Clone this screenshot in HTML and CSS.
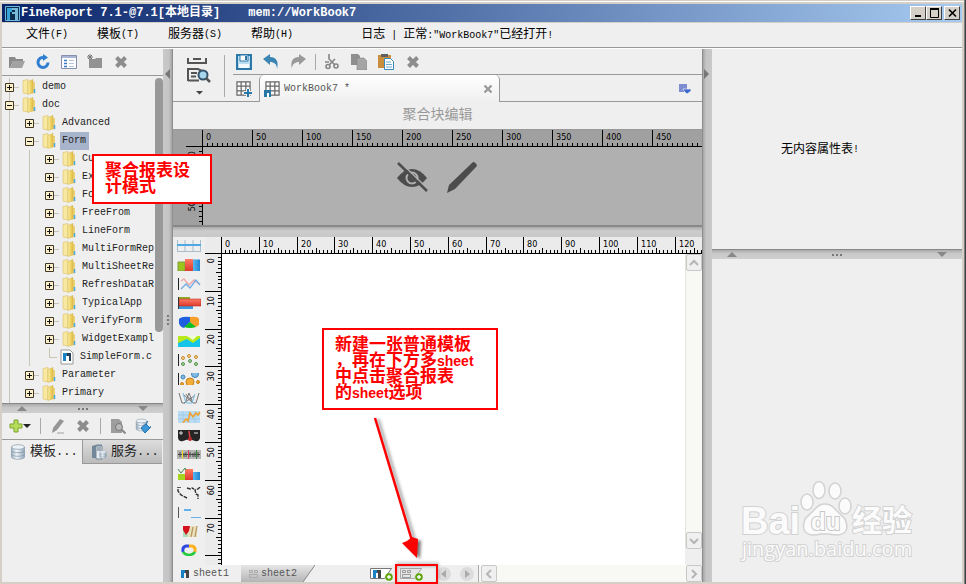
FILE: index.html
```html
<!DOCTYPE html>
<html lang="zh-CN">
<head>
<meta charset="utf-8">
<title>FineReport 7.1</title>
<link rel="stylesheet" href="styles.css">
</head>
<body>
<svg class="defs" aria-hidden="true">
  <defs>
    <linearGradient id="gold" x1="0" x2="1"><stop offset="0" stop-color="#fdf3b0"/><stop offset=".5" stop-color="#efd568"/><stop offset="1" stop-color="#e2bd45"/></linearGradient>
    <linearGradient id="steel" x1="0" x2="1"><stop offset="0" stop-color="#9fb2c4"/><stop offset=".4" stop-color="#f4f8fb"/><stop offset="1" stop-color="#93a7ba"/></linearGradient>
    <linearGradient id="red" x2="0" y2="1"><stop offset="0" stop-color="#ff7a66"/><stop offset="1" stop-color="#dc3a2c"/></linearGradient>
    <linearGradient id="blue" x1="0" x2="1"><stop offset="0" stop-color="#55b8f0"/><stop offset="1" stop-color="#2383cf"/></linearGradient>
  </defs>
  <symbol id="folder" viewBox="0 0 14 16"><path d="M8 3h5v11.500H8z" fill="#ecd27a"/><path d="M1 1.500 6 .5v14.500l-5-1z" fill="#f7e9a2" stroke="#dcc068" stroke-width=".6"/><path d="m6 2.500 5-2v13l-5 2z" fill="url(#gold)" stroke="#d9bb58" stroke-width=".6"/><path d="M12.500 10v4" stroke="#49a7dc" stroke-width="1.500"/></symbol>
  <symbol id="fine" viewBox="0 0 14 16"><path d="M1 1h9l3 3v11H1z" fill="#fff" stroke="#999"/><path d="M3 4h4v3H6v5H3z" fill="#1782c5"/><path d="M7 4h4v8H9V7H7z" fill="#263f55"/></symbol>
  <symbol id="cross" viewBox="0 0 16 16"><path d="m3.500 3.500 9 9m0-9-9 9" stroke="#8d8d8d" stroke-width="4"/></symbol>
  <symbol id="grid" viewBox="0 0 16 16"><path d="M1 1h14v14H1zM1 5.500h14M1 10.500h14M5.500 1v14M10.500 1v14" fill="#fafafa" stroke="#666" stroke-width="1.300"/></symbol>
  <symbol id="plus" viewBox="0 0 9 9"><path d="M.5.500h8v8h-8z" fill="#fbf0c8" stroke="#41382a"/><path d="M2 4.500h5M4.500 2v5" stroke="#111"/></symbol>
  <symbol id="minus" viewBox="0 0 9 9"><path d="M.5.500h8v8h-8z" fill="#fbf0c8" stroke="#41382a"/><path d="M2 4.500h5" stroke="#111"/></symbol>
  <symbol id="add" viewBox="0 0 8 8"><circle cx="4" cy="4" r="3.800" fill="#5fa60b"/><path d="M2 4h4M4 2v4" stroke="#fff" stroke-width="1.300"/></symbol>
  <symbol id="db" viewBox="0 0 16 16"><path d="M1.500 3v10c0 3 13 3 13 0V3z" fill="url(#steel)" stroke="#8799aa" stroke-width=".7"/><ellipse cx="8" cy="3" rx="6.500" ry="2.300" fill="#edf3f7" stroke="#8799aa" stroke-width=".7"/><path d="M1.500 6.500c0 3 13 3 13 0M1.500 10c0 3 13 3 13 0" fill="none" stroke="#8799aa" stroke-width=".8"/></symbol>
</svg>

<div class="window">
  <header class="titlebar">
    <svg class="logo" viewBox="0 0 15 15"><path d="M.5.500h14v14H.500z" fill="#0b2d4e" stroke="#6fb7dc"/><path d="M2 2h5v4H5v8H2z" fill="#38a4d8"/><path d="M7 2h6v12h-3V8H7V6h3V4H7z" fill="#78b9d8"/></svg>
    <h1>FineReport 7.1-@7.1[本地目录]</h1><span class="path">mem://WorkBook7</span>
    <div class="winbuttons">
      <button aria-label="最小化"><svg viewBox="0 0 12 11"><path d="M2 8h6" stroke="#000" stroke-width="2"/></svg></button>
      <button aria-label="最大化"><svg viewBox="0 0 12 11"><path d="M1.500 1v8.500h8V1" fill="none" stroke="#000"/><path d="M1 1h9" stroke="#000" stroke-width="2"/></svg></button>
      <button class="close" aria-label="关闭"><svg viewBox="0 0 12 11"><path d="m2 1.500 7 7m0-7-7 7" stroke="#000" stroke-width="1.600"/></svg></button>
    </div>
  </header>

  <nav class="menubar">
    <button>文件<span class="lat">(F)</span></button>
    <button>模板<span class="lat">(T)</span></button>
    <button>服务器<span class="lat">(S)</span></button>
    <button>帮助<span class="lat">(H)</span></button>
    <p class="log">日志<span class="lat"> | </span>正常<span class="lat">:"WorkBook7"</span>已经打开<span class="lat">!</span></p>
  </nav>

  <div class="main">
    <aside class="left">
      <div class="tools">
        <button aria-label="打开"><svg viewBox="0 0 16 16"><path d="M0 3h6l1 2h7v2H4L1 14H0z" fill="#8a8a8a"/><path d="M4 7h12l-3 7H1z" fill="#a2a2a2"/></svg></button>
        <button aria-label="刷新"><svg viewBox="0 0 16 16"><path d="M13 8.500a5 5 0 1 1-4-5" fill="none" stroke="#2f7fd0" stroke-width="3"/><path d="m8 0 5 3.500L8 7z" fill="#2f7fd0"/></svg></button>
        <button aria-label="视图"><svg viewBox="0 0 16 16"><path d="M.5 1.500h15v13H.500z" fill="#fff" stroke="#8590ad"/><path d="M1 3h14" stroke="#aab5d4" stroke-width="2"/><path d="M3 6.500h3M3 9.500h3M3 12.500h3" stroke="#3a78c5" stroke-width="1.500"/><path d="M8 6.500h5M8 9.500h5M8 12.500h5" stroke="#b9c2da"/></svg></button>
        <button aria-label="新建文件夹"><svg viewBox="0 0 16 16"><path d="M2 5h6l1-1h6v10H2z" fill="#929292"/><path d="M3 0v6M0 3h6M1 1l4 4m0-4L1 5" stroke="#777"/></svg></button>
        <button aria-label="删除"><svg><use href="#cross"/></svg></button>
      </div>
      <div class="treebox">
        <ul class="tree">
          <li><svg class="box"><use href="#plus"/></svg><svg class="ico"><use href="#folder"/></svg><span>demo</span></li>
          <li><svg class="box"><use href="#minus"/></svg><svg class="ico"><use href="#folder"/></svg><span>doc</span></li>
          <li><i></i><svg class="box"><use href="#plus"/></svg><svg class="ico"><use href="#folder"/></svg><span>Advanced</span></li>
          <li><i></i><svg class="box"><use href="#minus"/></svg><svg class="ico"><use href="#folder"/></svg><span class="selected">Form</span></li>
          <li><i></i><i></i><svg class="box"><use href="#plus"/></svg><svg class="ico"><use href="#folder"/></svg><span>Cu</span></li>
          <li><i></i><i></i><svg class="box"><use href="#plus"/></svg><svg class="ico"><use href="#folder"/></svg><span>Ex</span></li>
          <li><i></i><i></i><svg class="box"><use href="#plus"/></svg><svg class="ico"><use href="#folder"/></svg><span>Fo</span></li>
          <li><i></i><i></i><svg class="box"><use href="#plus"/></svg><svg class="ico"><use href="#folder"/></svg><span>FreeFrom</span></li>
          <li><i></i><i></i><svg class="box"><use href="#plus"/></svg><svg class="ico"><use href="#folder"/></svg><span>LineForm</span></li>
          <li><i></i><i></i><svg class="box"><use href="#plus"/></svg><svg class="ico"><use href="#folder"/></svg><span>MultiFormRep</span></li>
          <li><i></i><i></i><svg class="box"><use href="#plus"/></svg><svg class="ico"><use href="#folder"/></svg><span>MultiSheetRe</span></li>
          <li><i></i><i></i><svg class="box"><use href="#plus"/></svg><svg class="ico"><use href="#folder"/></svg><span>RefreshDataR</span></li>
          <li><i></i><i></i><svg class="box"><use href="#plus"/></svg><svg class="ico"><use href="#folder"/></svg><span>TypicalApp</span></li>
          <li><i></i><i></i><svg class="box"><use href="#plus"/></svg><svg class="ico"><use href="#folder"/></svg><span>VerifyForm</span></li>
          <li><i></i><i></i><svg class="box"><use href="#plus"/></svg><svg class="ico"><use href="#folder"/></svg><span>WidgetExampl</span></li>
          <li><i></i><i></i><b class="elbow"></b><svg class="ico"><use href="#fine"/></svg><span>SimpleForm.c</span></li>
          <li><i></i><svg class="box"><use href="#plus"/></svg><svg class="ico"><use href="#folder"/></svg><span>Parameter</span></li>
          <li><i></i><svg class="box"><use href="#plus"/></svg><svg class="ico"><use href="#folder"/></svg><span>Primary</span></li>
          <li><i></i><svg class="box"><use href="#plus"/></svg><svg class="ico"><use href="#folder"/></svg></li>
        </ul>
        <div class="thumb"></div>
      </div>
      <div class="hsplit"><b class="up"></b><b class="dots"></b><b class="down"></b></div>
      <div class="tools data">
        <button class="wide" aria-label="添加"><svg viewBox="0 0 22 16"><path d="M5 2h4v4h4v4H9v4H5v-4H1V6h4z" fill="#b6dc5c" stroke="#7da52c"/><path d="M14 6h8l-4 4z" fill="#222"/></svg></button>
        <hr>
        <button aria-label="编辑"><svg viewBox="0 0 16 16"><path d="M3 10 10 1l4 2-7 9-5 3z" fill="#969696"/><path d="M7 15h7" stroke="#bbb" stroke-width="1.500"/></svg></button>
        <button aria-label="删除"><svg><use href="#cross"/></svg></button>
        <hr>
        <button aria-label="预览"><svg viewBox="0 0 16 16"><path d="M1 1h8l3 3v11H1z" fill="#9d9d9d"/><circle cx="9" cy="9" r="3.500" fill="#b8b8b8" stroke="#777"/><path d="m11.500 11.500 4 4" stroke="#888" stroke-width="2"/></svg></button>
        <button aria-label="数据连接"><svg viewBox="0 0 16 16"><use href="#db" width="13" height="14"/><path d="m6 10 5-4 4 4-5 5z" fill="#3e97d8" stroke="#2370ab"/><path d="m11 6 2-3m2 7 1-2" stroke="#2370ab"/></svg></button>
      </div>
      <div class="lefttabs">
        <button class="on"><svg><use href="#db"/></svg><span>模板<small>...</small></span></button>
        <button><svg viewBox="0 0 16 16"><path d="m1 2 5-1.500h5V14H1z" fill="#72879a"/><path d="M5 2h6v13H5z" fill="#e5ebef" stroke="#78899a"/><path d="M6 4h4M6 6h4" stroke="#5b6d7d"/><use href="#db" x="8" y="6" width="8" height="9"/></svg><span>服务<small>...</small></span></button>
      </div>
    </aside>

    <div class="vsplit"><b class="toleft"></b><b class="vdots"></b></div>

    <section class="center">
      <header class="head">
        <button class="preview" aria-label="预览">
          <svg viewBox="0 0 26 38"><path d="M2 1v5h18V1" fill="none" stroke="#555" stroke-width="2"/><path d="M7 2h8" stroke="#555" stroke-width="2"/><path d="M2 24V12h10l4 2M5 16h6M5 19.500h5M2 23.500h11" fill="none" stroke="#555" stroke-width="2"/><circle cx="17" cy="18" r="4.500" fill="#a7d5ee" stroke="#35536a" stroke-width="2"/><path d="m20 21 4 4" stroke="#555" stroke-width="2.500"/><path d="M10 34h7l-3.500 3.500z" fill="#444"/></svg>
        </button>
        <div class="headmain">
          <div class="actions">
            <div class="group">
              <button aria-label="保存"><svg viewBox="0 0 16 16"><path d="M1 1h14v14H1z" fill="#b9dcee" stroke="#2a78a8" stroke-width="2"/><path d="M4 1h8v6H4z" fill="#fff" stroke="#2a78a8"/><path d="M9 2h2v4H9z" fill="#2a78a8"/><path d="M3 10h10v4H3z" fill="#f4fafd"/></svg></button>
              <button aria-label="撤销"><svg viewBox="0 0 16 16"><path d="m0 5 7-5v3c6 0 9 4 7 12 0-5-3-7-7-7v3z" fill="#3b84b3"/></svg></button>
              <button aria-label="重做"><svg viewBox="0 0 16 16"><path d="M16 5 9 0v3C3 3 0 7 2 15c0-5 3-7 7-7v3z" fill="#999"/></svg></button>
            </div>
            <div class="group">
              <button aria-label="剪切"><svg viewBox="0 0 16 16"><path d="M5 0v5l6 6M11 5l-6 6M1 8h4" fill="none" stroke="#858585" stroke-width="1.600"/><circle cx="4" cy="12.500" r="2" fill="none" stroke="#858585" stroke-width="1.600"/><circle cx="12" cy="12" r="2" fill="none" stroke="#858585" stroke-width="1.600"/></svg></button>
              <button aria-label="复制"><svg viewBox="0 0 16 16"><path d="M0 0h7l2 2v9H0z" fill="#8f8f8f"/><path d="M6 4h7l3 3v9H6z" fill="#a5a5a5" stroke="#858585" stroke-width=".6"/></svg></button>
              <button aria-label="粘贴"><svg viewBox="0 0 16 16"><path d="M0 1h13v13H0z" fill="#c98d3b"/><path d="M3 0h7v3H3z" fill="#5f5f5f"/><path d="M6.500 4.500h6l3 3v8h-9z" fill="#fff" stroke="#398abb"/><path d="M8 8h5M8 10.500h6M8 13h6" stroke="#6aa9cd"/></svg></button>
              <button aria-label="删除"><svg><use href="#cross"/></svg></button>
            </div>
          </div>
          <div class="doctabs">
            <button class="newtab" aria-label="新建"><svg viewBox="0 0 16 16"><use href="#grid" width="15" height="15"/><path d="M12 8v8M8 12h8" stroke="#efefef" stroke-width="4"/><path d="M12 8v8M8 12h8" stroke="#2877a8" stroke-width="2"/></svg></button>
            <div class="doctab"><svg viewBox="0 0 16 16"><use href="#grid" x="1" width="15" height="15"/><path d="M0 9h7v7H0z" fill="#2877a8"/><path d="M3 16v-4h2v4" fill="#fff"/></svg><span>WorkBook7 *</span><button aria-label="关闭标签"><svg viewBox="0 0 10 10"><path d="m1.500 1.500 7 7m0-7-7 7" stroke="#999" stroke-width="2.300"/></svg></button></div>
            <button class="tablist" aria-label="标签列表"><svg viewBox="0 0 12 10"><path d="M0 0h8v8H0z" fill="#7d8cd0"/><path d="M4 5h8v2l-4 3-3-3z" fill="#3c68cf" stroke="#efefef" stroke-width=".7"/></svg></button>
          </div>
        </div>
      </header>
      <h2>聚合块编辑</h2>
      <div class="block">
        <svg class="ruler hr" data-axis="x" data-origin="16" data-step="5" data-major="10" data-label="50"></svg>
        <svg class="ruler vr" data-axis="y" data-origin="-1" data-step="5" data-major="10" data-label="50"></svg>
        <div class="blockbody">
          <svg viewBox="0 0 32 32"><path d="M1 17Q8 8 16 8t15 9q-7 9-15 9T1 17z" fill="#4c4c4c"/><circle cx="16" cy="17" r="5.500" fill="none" stroke="#b0b0b0" stroke-width="2"/><path d="m4 1 28 27" stroke="#b0b0b0" stroke-width="1.500"/><path d="m2 2 29 28" stroke="#4c4c4c" stroke-width="2.500"/></svg>
          <svg viewBox="0 0 32 32"><path d="m3 24 24-23q3 0 4 4L9 28l-8 4z" fill="#4c4c4c"/></svg>
        </div>
      </div>
      <div class="hbar"></div>
      <div class="sheetarea">
        <div class="palette">
          <button aria-label="表格"><svg viewBox="0 0 24 12"><path d="M.5 0v12M8 0v12M16 0v12M23.500 0v12M0 11.500h24" stroke="#a9bccb"/><path d="M0 5h24" stroke="#4fa9e2" stroke-width="2"/></svg></button>
          <button aria-label="柱形图"><svg viewBox="0 0 24 12"><path d="M1 3h7v9H1z" fill="#9cc51c" stroke="#7b9e3c"/><path d="M8 0h8v12H8z" fill="url(#red)"/><path d="M16 .5h7V12h-7z" fill="url(#blue)"/></svg></button>
          <button aria-label="折线图"><svg viewBox="0 0 24 12"><path d="M1.500 0v12" stroke="#222"/><path d="m4 3 3-2 5 6 5-5 5 4" fill="none" stroke="#f0a8a8" stroke-width="1.500"/><path d="m4 11 5-5 4 4 6-8 4 5" fill="none" stroke="#6faee3" stroke-width="1.300"/></svg></button>
          <button aria-label="条形图"><svg viewBox="0 0 24 12"><path d="M1 0h12v3H1z" fill="#8cae20"/><path d="M1 9h15v3H1z" fill="#3b9be0"/><path d="M2 2h22v7H2z" fill="url(#red)" stroke="#bd3428" stroke-width=".6"/><path d="M1.500 0v12" stroke="#333"/></svg></button>
          <button aria-label="饼图"><svg viewBox="0 0 24 12"><path d="M2 3q3-3 11-2v5l-6 6q-6-1-5-9z" fill="#1e5ee0"/><path d="M13 1q8-1 9 2v6q-2 2-4 2l-5-5z" fill="#f89f2b"/><path d="m13 6 6 5q-6 2-12 0z" fill="#0fbf24"/></svg></button>
          <button aria-label="面积图"><svg viewBox="0 0 24 12"><path d="M1 1h22v11H1z" fill="#16c4ea"/><path d="M1 1h22v2l-7 5-6-4-9 4z" fill="#b7e91d"/><path d="m10 1 6 4 4-4z" fill="#efffd6"/></svg></button>
          <button aria-label="散点图"><svg viewBox="0 0 24 12"><path d="M1.500 0v12" stroke="#222"/><g fill="#f6d493" stroke="#c98c2a"><circle cx="6" cy="4" r="1.500"/><circle cx="12" cy="2" r="1.500"/><circle cx="19" cy="3" r="1.500"/></g><g fill="#a5d49b" stroke="#58954f"><circle cx="6" cy="10" r="1.500"/><circle cx="13" cy="7" r="1.500"/><circle cx="19" cy="10" r="1.500"/></g></svg></button>
          <button aria-label="气泡图"><svg viewBox="0 0 24 12"><path d="M1.500 0v12" stroke="#222"/><g fill="#7fb9e3" stroke="#4286bb"><circle cx="6" cy="4" r="2"/><circle cx="18" cy="1" r="3.500"/></g><g fill="#f3ac35" stroke="#c7811a"><circle cx="13" cy="9" r="4"/><circle cx="5" cy="11" r="1.500"/><circle cx="21" cy="9" r="1.500"/></g></svg></button>
          <button aria-label="雷达图"><svg viewBox="0 0 24 12"><path d="m2 1 3 10h3L12 1l4 10h3l3-10M7 11l10-7M7 3l9 8M9 2l6 8" fill="none" stroke="#777"/><path d="m6 1 3 10h6l3-9" fill="none" stroke="#76b9e3"/></svg></button>
          <button aria-label="股价图"><svg viewBox="0 0 24 12"><path d="M1 0h22v12H1z" fill="#b9dbf3"/><path d="M1 4h22M1 8h22M6 0v12M12 0v12M18 0v12" stroke="#93c2e4" stroke-width=".6"/><path d="m6 12 3-4 2 2 2-8 3 4 3-4 2 2 2-3" fill="none" stroke="#f2a12c" stroke-width="1.500"/></svg></button>
          <button aria-label="仪表盘"><svg viewBox="0 0 24 12"><path d="M1 0h22v8q-1 4-5 3-6-3-12 0-4 1-5-3z" fill="#252525"/><path d="M4 1v4M2 3h4M17 3h4" stroke="#ddd"/><path d="m12 1 1 8" stroke="#e14141" stroke-width="1.500"/><circle cx="13" cy="9" r="2" fill="#bb2828"/></svg></button>
          <button aria-label="范围图"><svg viewBox="0 0 24 12"><path d="M0 1h24v9H0z" fill="#b4b4b4"/><path d="M1 5.500h22" stroke="#444"/><path d="M3 3v5M7 4v4M9 3v5M13 3v5M16 4v4M18 3v5M21 3v5" stroke="#444"/><path d="M5.500 1v9" stroke="#f2d423"/><path d="M11.500 1v9" stroke="#de3b57"/><path d="M19.500 1v9" stroke="#348b3d"/></svg></button>
          <button aria-label="组合图"><svg viewBox="0 0 24 12"><path d="M1 6h7v6H1z" fill="#a4d51f"/><path d="M8 1h8v11H8z" fill="url(#red)"/><path d="M16 4h7v8h-7z" fill="url(#blue)"/><path d="m1 1 3 4 4-5 1 2" fill="none" stroke="#41894b"/></svg></button>
          <button aria-label="地图"><svg viewBox="0 0 24 12"><path d="M4 0H1v4l3 4 6 3M10 1l3 1 2-1 2 1M23 0l-2 2-3 1 1 4 2 1v4" fill="none" stroke="#333" stroke-width="1.400" stroke-dasharray="4 1"/></svg></button>
          <button aria-label="甘特图"><svg viewBox="0 0 24 12"><path d="M1.500 1v11" stroke="#555"/><path d="M7 4h7" stroke="#62b2ef" stroke-width="2"/><path d="M14 11.500h10" stroke="#62b2ef"/></svg></button>
          <button aria-label="定位图"><svg viewBox="0 0 24 12"><path d="M6 1h5l7 11H6z" fill="#a8dfb8"/><path d="M10 1h10v11h-9z" fill="#eae0bb"/><path d="m14 12 2-10m2 10 2-11" stroke="#b39863" stroke-width="1.300"/><path d="M6 1h7l-1 5-3 4-3-5z" fill="#d5111e"/></svg></button>
          <button aria-label="圆环图"><svg viewBox="0 0 24 12"><path d="M12 2H9Q5 3 6 8" fill="none" stroke="#3049df" stroke-width="3"/><path d="M12 2h3q4 1 3 6" fill="none" stroke="#fbb21e" stroke-width="3"/><path d="M6 8q2 3 6 3t6-3" fill="none" stroke="#23cc3a" stroke-width="2.500"/></svg></button>
        </div>
        <svg class="ruler hr" data-axis="x" data-origin="16" data-step="3.78" data-major="10" data-mid="5" data-label="10"></svg>
        <svg class="ruler vr" data-axis="y" data-origin="-1" data-step="3.78" data-major="10" data-mid="5" data-label="10"></svg>
        <div class="canvas"></div>
        <div class="vscroll">
          <button aria-label="向上"><svg viewBox="0 0 12 12"><path d="m2 8 4-4 4 4" fill="none" stroke="#b5b5b5" stroke-width="2"/></svg></button>
          <button aria-label="向下"><svg viewBox="0 0 12 12"><path d="m2 4 4 4 4-4" fill="none" stroke="#b5b5b5" stroke-width="2"/></svg></button>
        </div>
      </div>
      <footer class="sheets">
        <button class="sheet"><svg viewBox="0 0 9 8"><path d="M0 0h4v3H3v5H0z" fill="#1782c5"/><path d="M4 0h4v8H5V3H4z" fill="#444"/></svg><span>sheet1</span></button>
        <button class="sheet two"><svg class="slope" viewBox="0 0 74 17"><defs><linearGradient id="tabg" x2="0" y2="1"><stop offset="0" stop-color="#e6e6e6"/><stop offset="1" stop-color="#b5b5b5"/></linearGradient></defs><path d="M0 0h74L62 17H0z" fill="url(#tabg)"/><path d="M74 0 62 17" stroke="#888"/></svg><svg viewBox="0 0 9 8"><path d="M.5.500h3v2h-3zM5.500.500h3v2h-3zM.5 4.500h8v3h-8z" fill="none" stroke="#aaa"/></svg><span>sheet2</span></button>
        <div class="newsheets">
          <button aria-label="新建普通报表"><svg viewBox="0 0 23 14"><path d="M.5 1.500h21l-7 10H.500z" fill="#fff" stroke="#777"/><path d="M3 3h4v3H6v5H3z" fill="#1782c5"/><path d="M7 3h4v8H8V6H7z" fill="#444"/><use href="#add" x="15" y="6" width="8" height="8"/></svg></button>
          <button aria-label="新建聚合报表"><svg viewBox="0 0 23 14"><path d="M.5 1.500h21l-7 10H.500z" fill="#e6e6e6" stroke="#aaa"/><path d="M2.500 3.500h3v2h-3zM7.500 3.500h3v2h-3zM2.500 7.500h8v3h-8z" fill="none" stroke="#999"/><use href="#add" x="15" y="6" width="8" height="8"/></svg></button>
        </div>
        <div class="navs">
          <button aria-label="上一个"><svg viewBox="0 0 14 14"><circle cx="7" cy="7" r="7" fill="#dcdcdc"/><path d="M9 3v8L4 7z" fill="#aaa"/></svg></button>
          <button aria-label="下一个"><svg viewBox="0 0 14 14"><circle cx="7" cy="7" r="7" fill="#dcdcdc"/><path d="M5 3v8l5-4z" fill="#aaa"/></svg></button>
        </div>
        <div class="hscroll">
          <button aria-label="向左"><svg viewBox="0 0 12 12"><path d="M8 2 4 6l4 4" fill="none" stroke="#b5b5b5" stroke-width="2"/></svg></button>
          <button aria-label="向右"><svg viewBox="0 0 12 12"><path d="m4 2 4 4-4 4" fill="none" stroke="#b5b5b5" stroke-width="2"/></svg></button>
        </div>
      </footer>
    </section>

    <div class="vsplit flip"><b class="toright"></b></div>

    <aside class="right">
      <div class="props">无内容属性表<span class="lat">!</span></div>
      <div class="hsplit"><b class="up"></b><b class="dots"></b><b class="down"></b></div>
      <div class="lower">
        <svg class="mark" viewBox="0 0 176 84">
          <g fill="#fbfbfb" stroke="#d2d2d2" stroke-width="1.500">
            <ellipse cx="67" cy="22" rx="6" ry="8"/>
            <ellipse cx="79" cy="10" rx="6" ry="8.500"/>
            <ellipse cx="95" cy="11" rx="6" ry="8"/>
            <ellipse cx="105" cy="26" rx="6" ry="8"/>
            <path d="M85 24q6 0 10 5l10 10q6 14-7 16-5 0-9-1h-8q-4 1-9 1-12-2-7-16l10-10q4-5 10-5z"/>
          </g>
          <g class="marktext">
            <text x="1" y="54" class="big">Bai</text>
            <text x="71" y="50" class="du">du</text>
            <text x="112" y="51" class="cn">经验</text>
            <text x="2" y="76" class="url">jingyan.baidu.com</text>
          </g>
        </svg>
      </div>
    </aside>
  </div>

  <div class="note first">聚合报表设<br>计模式</div>
  <div class="note second">新建一张普通模板<br>，再在下方多<span>sheet</span><br>中点击聚合报表<br>的<span>sheet</span>选项</div>
  <svg class="arrow" viewBox="0 0 60 150"><defs><filter id="soft"><feGaussianBlur stdDeviation="1.500"/></filter></defs><g filter="url(#soft)"><path d="m8 3 38 126" stroke="#0005" stroke-width="3"/><path d="m35 128 16-4-1 19z" fill="#0008"/></g><path d="m5 2 38 126" stroke="#f00" stroke-width="2.500"/><path d="m32 127 5-2 5-4 6 2-1 19z" fill="#f00"/></svg>
  <div class="target"></div>
</div>
<script src="rulers.js"></script>
</body>
</html>
```

FILE: styles.css
```css
* { box-sizing: border-box; }
body { margin: 0; background: #d4d0c8; color: #000; font: 12px/18px "Liberation Mono", "Noto Sans CJK SC", monospace; }
button { padding: 0; border: 0; background: none; color: inherit; font: inherit; display: flex; align-items: center; }
svg { display: block; flex: none; }
h1, h2, p, ul { margin: 0; padding: 0; font: inherit; }
.defs { position: absolute; width: 0; height: 0; }
.lat { font-size: 10px; white-space: pre; }

.window { position: relative; display: grid; grid-template-rows: 18px 26px 1fr; height: 100vh; padding: 4px 4px 2px 2px; overflow: hidden; box-shadow: inset -1px 0 #404040, inset -2px 0 #808080, inset 0 1px #d4d0c8, inset 0 2px #fff; }

.titlebar { display: flex; align-items: center; padding: 0 2px 0 3px; background: linear-gradient(90deg, #0a246a, #a6caf0); color: #fff; font-weight: bold; white-space: pre; }
.titlebar h1 { margin-left: 1px; }
.logo { width: 15px; height: 15px; }
.path { margin-left: 28px; }
.winbuttons { display: flex; margin-left: auto; }
.winbuttons button { width: 16px; height: 14px; padding: 1px 2px; background: #d4d0c8; border: 1px solid; border-color: #fff #404040 #404040 #fff; }
.winbuttons .close { margin-left: 2px; }
.winbuttons svg { width: 12px; height: 11px; }

.menubar { display: flex; align-items: center; gap: 29px; padding-left: 24px; background: #efefef; border-top: 1px solid #d4d0c8; border-bottom: 1px solid #999; white-space: nowrap; }
.log { margin-left: 39px; }

.main { display: grid; grid-template-columns: 161px 10px minmax(0, 1fr) 10px 250px; min-height: 0; padding-top: 1px; background: #efefef; box-shadow: inset 0 1px #fff; }

.left { display: grid; grid-template-rows: 27px minmax(0, 1fr) 10px 26px 25px 118px; min-width: 0; min-height: 0; }
.tools { display: flex; align-items: center; gap: 10px; padding-left: 7px; border-bottom: 1px solid #999; }
.tools svg { width: 16px; height: 16px; }
.tools hr { width: 1px; height: 16px; margin: 0; border: 0; background: #aaa; }
.data { gap: 9px; border-bottom: 0; }
.data .wide svg { width: 22px; }
.treebox { display: flex; overflow: hidden; padding-top: 2px; }
.tree { flex: 1; min-width: 0; overflow: hidden; list-style: none; font-size: 10px; color: #222; background: linear-gradient(#c9c5b5, #c9c5b5) 7px 0 / 1px 100% no-repeat; }
.tree li { display: flex; align-items: center; height: 18px; padding-left: 3px; white-space: nowrap; }
.tree i { width: 20px; height: 18px; flex: none; background: linear-gradient(#c9c5b5, #c9c5b5) 4px 0 / 1px 100% no-repeat; }
.tree i:last-of-type { background-position: 24px 0; background: linear-gradient(#c9c5b5, #c9c5b5) 4px 0 / 1px 100% no-repeat; }
.box { width: 9px; height: 9px; }
.elbow { width: 9px; height: 18px; background: linear-gradient(#c9c5b5, #c9c5b5) 4px 0 / 1px 9px no-repeat, linear-gradient(#c9c5b5, #c9c5b5) 4px 9px / 5px 1px no-repeat; }
.ico { width: 14px; height: 16px; margin: 0 4px 0 0; }
.box + .ico, .elbow + .ico { width: 22px; padding-left: 8px; background: linear-gradient(#c9c5b5, #c9c5b5) 0 8px / 5px 1px no-repeat; }
.tree span { padding: 0 3px 0 2px; }
.selected { background: #a8b4cc; }
.thumb { width: 8px; height: 254px; border-radius: 4px; background: #999; }

.hsplit { display: flex; justify-content: space-between; align-items: center; padding: 0 15px; border-top: 1px solid #888; background: linear-gradient(#aaa, #c8c8c8 40%, #cfcfcf); }
.up, .down { border: 5px solid transparent; }
.up { border-top: 0; border-bottom: 5px solid #888; }
.down { border-bottom: 0; border-top: 5px solid #888; }
.dots { width: 10px; height: 2px; background: repeating-linear-gradient(90deg, #777 0 2px, transparent 2px 4px); }

.lefttabs { display: grid; grid-template-columns: 80px 80px; border-top: 1px solid #999; }
.lefttabs button { gap: 4px; padding-left: 8px; font-size: 13px; color: #222; background: linear-gradient(#ddd, #bbb); border: 1px solid #999; border-width: 0 0 1px 1px; white-space: nowrap; }
.lefttabs .on { background: none; border: 0; }
.lefttabs svg { width: 16px; height: 16px; }
.lefttabs small { font-size: 12px; }

.vsplit { position: relative; background: linear-gradient(90deg, #c9c9c9, #c4c4c4 60%, #aaa 85%, #808080); }
.flip { background: linear-gradient(270deg, #c9c9c9, #c4c4c4 60%, #aaa 85%, #808080); }
.toleft, .toright { position: absolute; top: 20px; border: 5px solid transparent; }
.toleft { right: 3px; border-left: 0; border-right-color: #777; }
.toright { left: 2px; border-right: 0; border-left-color: #777; }
.vdots { position: absolute; left: 4px; top: 266px; width: 2px; height: 10px; background: repeating-linear-gradient(#777 0 2px, transparent 2px 4px); }

.center { display: grid; grid-template-rows: 53px 28px 97px 10px minmax(0, 1fr) 17px; min-width: 0; min-height: 0; }
.head { display: grid; grid-template-columns: 60px minmax(0, 1fr); border-bottom: 1px solid #999; }
.preview { width: 52px; height: 42px; margin-top: 6px; padding-left: 13px; border-right: 1px solid #aaa; }
.preview svg { width: 26px; height: 38px; }
.headmain { display: grid; grid-template-rows: 26px 27px; }
.actions { display: flex; align-items: center; padding-left: 3px; border-bottom: 1px solid #999; }
.group { display: flex; gap: 11px; }
.group + .group { margin-left: 9px; padding-left: 8px; border-left: 1px solid #aaa; }
.group svg { width: 16px; height: 16px; }
.doctabs { display: flex; align-items: center; padding-left: 3px; }
.newtab svg, .doctab > svg { width: 16px; height: 16px; }
.doctab { display: flex; align-items: center; gap: 4px; width: 241px; height: 27px; margin-left: 7px; padding: 0 6px 0 4px; border: 1px solid #999; border-width: 0 1px; border-radius: 5px 5px 0 0; background: linear-gradient(#fff, #efefef); color: #555; font-size: 10px; }
.doctab button { margin-left: auto; }
.doctab button svg { width: 10px; height: 10px; }
.tablist { margin: 0 11px 0 auto; }
.tablist svg { width: 12px; height: 10px; }
.center h2 { border-bottom: 1px solid #999; color: #999; font-size: 14px; line-height: 27px; text-align: center; }

.block { display: grid; grid-template-columns: 13px 17px minmax(0, 1fr); grid-template-rows: 17px 1fr; background: #a0a0a0; border-bottom: 2px solid #888; }
.blockbody { grid-column: 3; grid-row: 2; display: flex; justify-content: center; gap: 18px; padding: 14px 31px 0 0; background: #b0b0b0; }
.blockbody svg { width: 32px; height: 32px; }
.hbar { background: linear-gradient(#aaa, #ccc 40%, #c8c8c8); }
.ruler { width: 100%; height: 100%; overflow: hidden; font: 9px "DejaVu Sans Condensed", sans-serif; }
.hr { grid-column: 2 / -1; grid-row: 1; }
.vr { grid-column: 2; grid-row: 2; }

.sheetarea { display: grid; grid-template-columns: 32px 17px minmax(0, 1fr) 17px; grid-template-rows: 17px minmax(0, 1fr); min-height: 0; }
.palette { grid-row: 1 / 3; grid-column: 1; display: grid; grid-auto-rows: 12px; row-gap: 7px; align-content: start; padding: 3px 4px 0; min-height: 0; }
.palette svg { width: 24px; height: 12px; }
.sheetarea .ruler { background: #ebebeb; }
.canvas { grid-column: 3; grid-row: 2; background: #fff; }
.vscroll { grid-column: 4; grid-row: 2; display: flex; flex-direction: column; justify-content: space-between; margin-bottom: 16px; background: #f8f8f5; border-left: 1px solid #e5e5dc; }
.vscroll button, .hscroll button { width: 16px; height: 17px; justify-content: center; background: #f0f0f0; border: 1px solid #c8c8c8; border-radius: 2px; }
.vscroll svg, .hscroll svg { width: 12px; height: 12px; }

.sheets { display: flex; align-items: center; color: #555; }
.sheet { position: relative; width: 68px; height: 17px; gap: 3px; padding-left: 8px; font-size: 10px; }
.sheet > svg { width: 9px; height: 8px; }
.sheet.two { width: 74px; }
.sheet.two > :not(.slope) { position: relative; }
.sheet .slope { position: absolute; left: 0; top: 0; width: 74px; height: 17px; }
.newsheets { display: flex; gap: 7px; margin-left: 55px; }
.newsheets svg { width: 23px; height: 14px; }
.navs { display: flex; gap: 9px; margin: 0 4px 0 14px; }
.navs svg { width: 14px; height: 14px; }
.hscroll { display: flex; flex: 1; justify-content: space-between; background: #f8f8f5; border-left: 1px solid #aaa; padding-left: 2px; }

.right { display: grid; grid-template-rows: 200px 10px minmax(0, 1fr); min-height: 0; }
.props { display: flex; align-items: center; justify-content: center; padding: 2px 34px 0 0; }
.lower { display: flex; justify-content: flex-end; align-items: flex-end; padding: 0 46px 18px 0; }
.mark { width: 176px; height: 84px; }
.marktext { fill: #fbfbfb; stroke: #d2d2d2; stroke-width: 2px; paint-order: stroke; }
.big { font: bold 38px "Liberation Sans", sans-serif; }
.du { font: bold 24px "Liberation Sans", sans-serif; stroke: #c8c8c8; }
.cn { font: bold 30px "Noto Sans CJK SC", sans-serif; }
.url { font: 20px "Open Sans", sans-serif; }

.note { position: absolute; border: 2px solid #f00; background: #fff; color: #f00; font: bold 17px/16px "Noto Sans CJK SC", sans-serif; white-space: nowrap; }
.note span { font: bold 14px/1px "Liberation Sans", sans-serif; }
.first { left: 92px; top: 154px; width: 120px; height: 50px; padding: 5px 11px; }
.second { left: 322px; top: 328px; width: 176px; height: 82px; padding: 5px 11px; }
.arrow { position: absolute; left: 370px; top: 416px; width: 60px; height: 150px; }
.target { position: absolute; left: 395px; top: 564px; width: 43px; height: 20px; border: 2px solid #f00; box-shadow: 1px -2px 3px #0003, inset 1px 1px 3px #0003; }
```

FILE: rulers.js
```js
const NS = "http://www.w3.org/2000/svg";

// Draws ticks and labels along one axis, as far as the ruler is long.
function drawRuler(svg) {
  const d = svg.dataset;
  const horizontal = d.axis === "x";
  const { width, height } = svg.getBoundingClientRect();
  const length = horizontal ? width : height;
  const edge = Math.round(horizontal ? height : width) - 1;
  const origin = Number(d.origin);
  let path = horizontal ? `M0 ${edge}.5H${width}` : `M${edge}.5 0V${height}`;
  svg.replaceChildren();
  for (let i = 0; ; i++) {
    const at = origin + Math.round(i * d.step);
    if (at > length) break;
    const major = i % d.major === 0;
    const size = major ? edge : d.mid && i % d.mid === 0 ? 5 : 3;
    if (horizontal) path += `M${at}.5 ${edge - size}V${edge}`;
    else if (at >= 0) path += `M${edge - size} ${at}.5H${edge}`;
    if (major && at + 10 < length) {
      const text = document.createElementNS(NS, "text");
      text.textContent = (i / d.major) * d.label;
      if (horizontal) {
        text.setAttribute("x", at + 4);
        text.setAttribute("y", 10);
      } else {
        text.setAttribute("text-anchor", "end");
        text.setAttribute("transform", `translate(9 ${at + 5}) rotate(-90)`);
      }
      svg.append(text);
    }
  }
  const ticks = document.createElementNS(NS, "path");
  ticks.setAttribute("d", path);
  ticks.setAttribute("stroke", "#000");
  svg.append(ticks);
}

function drawAll() {
  document.querySelectorAll(".ruler").forEach(drawRuler);
}

drawAll();
window.addEventListener("resize", drawAll);
```
